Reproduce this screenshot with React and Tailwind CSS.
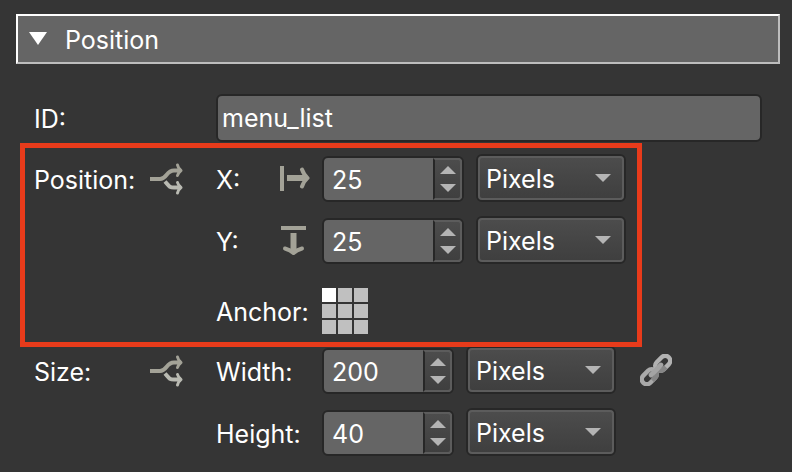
import { useState } from 'react';

const field = 'rounded-md border-2 border-[#272727] bg-[#656565] text-white outline-none';

function BranchIcon() {
  return (
    <svg width="34" height="32" viewBox="0 0 34 32" fill="none" strokeWidth="4" aria-hidden="true">
      <path d="M0 16H10C17 16 16 7.500 24 7.500H31" stroke="#a3a297" />
      <path d="M27.500 2C28 4.500 29 6 31 7.500C29 9 28 10.500 27.500 12.500" stroke="#a3a297" strokeWidth="3" strokeLinecap="round" strokeLinejoin="round" />
      <path d="M15 18.500C19 23 19 24.500 24 24.500H31" stroke="#b9bab2" />
      <path d="M27.500 19.500C28 21.500 29 23 31 24.500C29 26 28 27.500 27.500 30" stroke="#b9bab2" strokeWidth="3" strokeLinecap="round" strokeLinejoin="round" />
    </svg>
  );
}

function OffsetXIcon() {
  return (
    <svg width="30" height="28" viewBox="0 0 30 28" fill="none" stroke="#a3a297" aria-hidden="true">
      <path d="M2 1V26" strokeWidth="4" />
      <path d="M7 13H26" strokeWidth="6" />
      <path d="M22 4.500C23.500 8.500 25 11 27.500 13C25 15 23.500 17.500 22 21.500" strokeWidth="4" strokeLinecap="round" strokeLinejoin="round" />
    </svg>
  );
}

function OffsetYIcon() {
  return (
    <svg width="30" height="30" viewBox="0 0 30 30" fill="none" stroke="#a3a297" aria-hidden="true">
      <path d="M1 2H26" strokeWidth="4" />
      <path d="M13.500 7V26" strokeWidth="6" />
      <path d="M5 22.500C8.500 23.500 11.500 25 13.500 27C15.500 25 18.500 23.500 22 22.500" strokeWidth="4" strokeLinecap="round" strokeLinejoin="round" />
    </svg>
  );
}

function ChainIcon() {
  return (
    <svg width="32" height="32" viewBox="0 0 32 32" fill="none" aria-hidden="true">
      <g transform="rotate(-45 16 16)" strokeWidth="4.500">
        <rect x="-2" y="11" width="17" height="10" rx="5" stroke="#a9a9a9" />
        <rect x="17" y="11" width="17" height="10" rx="5" stroke="#b2b2b2" />
        <path d="M6 21H10A5 5 0 0 0 15 16" stroke="#868686" />
        <path d="M17 16A5 5 0 0 0 22 21H25" stroke="#868686" />
        <path d="M9 16H23" stroke="#a4a4a4" strokeWidth="5" strokeLinecap="round" />
      </g>
    </svg>
  );
}

function NumberField({ label, name, value, onChange, size }) {
  return (
    <div className={`flex h-[46px] ${size} overflow-hidden ${field}`}>
      <input
        id={name}
        aria-label={label}
        inputMode="numeric"
        value={value}
        onChange={(e) => onChange(e.target.value)}
        className="min-w-0 flex-1 bg-transparent pt-0.5 pl-2 text-[25px] leading-8 outline-none"
      />
      <div className="flex w-[29px] flex-col rounded-r border-2 border-[#5c5c5c] border-l-[#272727] bg-linear-to-b from-[#4c4c4c] to-[#3f3f3f]">
        <button type="button" aria-label={`Increase ${label}`} onClick={() => onChange(Number(value) + 1)} className="flex flex-1 items-end justify-center pb-[5px]">
          <svg width="16" height="8" viewBox="0 0 16 8" fill="#b4b4b4"><path d="M0 8L8 0L16 8Z" /></svg>
        </button>
        <button type="button" aria-label={`Decrease ${label}`} onClick={() => onChange(Number(value) - 1)} className="flex flex-1 items-start justify-center pt-[5px]">
          <svg width="16" height="8" viewBox="0 0 16 8" fill="#b4b4b4"><path d="M0 0L8 8L16 0Z" /></svg>
        </button>
      </div>
    </div>
  );
}

function UnitSelect({ label }) {
  return (
    <div className="relative h-12 w-[150px] rounded-md border-2 border-[#272727]">
      <select
        aria-label={`${label} unit`}
        className="h-full w-full appearance-none rounded border-2 border-[#5c5c5c] bg-linear-to-b from-[#4c4c4c] to-[#3f3f3f] pt-0.5 pl-1.5 text-[25px] leading-8 text-white outline-none"
      >
        <option>Pixels</option>
        <option>Percent</option>
      </select>
      <svg className="pointer-events-none absolute top-[18px] right-[13px]" width="16" height="8" viewBox="0 0 16 8" fill="#b4b4b4">
        <path d="M0 0L8 8L16 0Z" />
      </svg>
    </div>
  );
}

function Row({ title, label, name, icon, initial, size = 'w-[142px]', children }) {
  const [value, setValue] = useState(initial);
  return (
    <div className="flex items-end">
      <div className="flex h-[46px] w-[182px] shrink-0 items-center">
        {title && (
          <>
            <span className="w-[116px] pt-0.5">{title}</span>
            <BranchIcon />
          </>
        )}
      </div>
      <div className="flex h-[46px] w-[106px] shrink-0 items-center">
        <label htmlFor={name} className={icon ? 'w-16 pt-0.5' : 'pt-0.5'}>{label}</label>
        {icon}
      </div>
      <NumberField label={label} name={name} value={value} onChange={setValue} size={size} />
      <div className="ml-3">
        <UnitSelect label={label} />
      </div>
      {children}
    </div>
  );
}

function AnchorPicker() {
  const [anchor, setAnchor] = useState(0);
  return (
    <div className="grid grid-cols-3 gap-0.5" role="group" aria-label="Anchor">
      {Array.from({ length: 9 }, (_, i) => (
        <button
          key={i}
          type="button"
          aria-label={`Anchor ${i + 1}`}
          aria-pressed={anchor === i}
          onClick={() => setAnchor(i)}
          className={`size-3.5 ${anchor === i ? 'bg-white' : 'bg-[#c0c0c0]'}`}
        />
      ))}
    </div>
  );
}

export default function App() {
  const [open, setOpen] = useState(true);
  return (
    <div className="min-h-screen bg-[#353535] pt-3.5 pb-4 font-[family-name:Inter,Roboto,sans-serif] text-[25px] leading-8 text-white">
      {/* Section header */}
      <div className="pr-3 pl-4">
        <button
          type="button"
          aria-expanded={open}
          onClick={() => setOpen(!open)}
          className="flex h-[50px] w-full items-center border-2 border-white border-r-[#bdbdbd] border-b-[#bdbdbd] bg-[#656565] pl-[11px]"
        >
          <svg className="mr-[18px] mb-0.5" width="18" height="13" viewBox="0 0 18 13" fill="#fff">
            <path d="M0 0H18L9 13Z" />
          </svg>
          <span className="pt-0.5">Position</span>
        </button>
      </div>

      {open && (
        <form className="mt-[30px]" onSubmit={(e) => e.preventDefault()}>
          <div className="flex items-center pr-[30px] pl-[34px]">
            <label htmlFor="id" className="w-[182px] shrink-0 pt-0.5">ID:</label>
            <input id="id" defaultValue="menu_list" className={`h-12 min-w-0 flex-1 pl-1 ${field}`} />
          </div>

          {/* Highlighted position block */}
          <div className="relative z-10 mt-px ml-5 flex w-fit flex-col gap-3.5 border-[5px] border-[#e83b1b] py-1.5 pr-[11px] pl-[9px]">
            <Row title="Position:" label="X:" name="pos-x" initial="25" icon={<OffsetXIcon />} />
            <Row label="Y:" name="pos-y" initial="25" icon={<OffsetYIcon />} />
            <div className="flex items-center pt-2.5 pb-0.5 pl-[182px]">
              <span className="w-[106px] pt-0.5">Anchor:</span>
              <AnchorPicker />
            </div>
          </div>

          <div className="-mt-px flex flex-col gap-3.5 pl-[34px]">
            <Row title="Size:" label="Width:" name="width" initial="200" size="w-[132px]">
              <button type="button" aria-label="Link width and height" className="mb-2 ml-6">
                <ChainIcon />
              </button>
            </Row>
            <Row label="Height:" name="height" initial="40" size="w-[132px]" />
          </div>
        </form>
      )}
    </div>
  );
}
